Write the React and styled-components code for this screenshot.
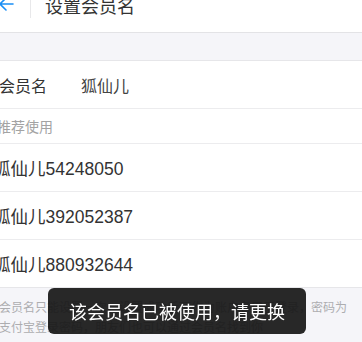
import React from "react";
import styled, {createGlobalStyle} from "styled-components";

const GlobalStyle = createGlobalStyle`
  html, body {
    margin: 0;
    padding: 0;
    overflow: hidden;
    background: #f5f5f9;
  }

  body {
    font-family: "Liberation Sans", "Noto Sans CJK SC", sans-serif;
  }
`;

const names = [
    "狐仙儿54248050",
    "狐仙儿392052387",
    "狐仙儿880932644"
];

const App = () => {
    return (
        <>
            <GlobalStyle/>
            <Page>
                <Header>
                    <Back>
                        <svg width="16" height="16" viewBox="0 0 16 16" fill="none">
                            <path d="M15 8H2M8 2L2 8l6 6" stroke="#1a8ef5" strokeWidth="1.6"
                                  strokeLinecap="round" strokeLinejoin="round"/>
                        </svg>
                    </Back>
                    <Divider/>
                    <Title>设置会员名</Title>
                </Header>
                <Section>
                    <FieldRow>
                        <Label>会员名</Label>
                        <Value>狐仙儿</Value>
                    </FieldRow>
                    <HintRow>推荐使用</HintRow>
                    {
                        names.map((item) => (
                            <NameRow key={item}>{item}</NameRow>
                        ))
                    }
                </Section>
                <Note>
                    会员名只能设置一次，设置成功后可作为账户名用于登录，密码为支付宝登录密码，朋友们也可以通过会员名找到你
                </Note>
            </Page>
            <Toast>该会员名已被使用，请更换</Toast>
        </>
    )
}

const Page = styled.div`
  margin-left: -16px;
  width: calc(100% + 16px);
  min-height: 342px;
  background: #f5f5f9;
`;

const Header = styled.div`
  display: flex;
  align-items: center;
  height: 54px;
  margin-top: -22px;
  padding-left: 14px;
  background: #fff;
  border-bottom: 1px solid #e3e3e6;
`;

const Back = styled.div`
  display: flex;
  align-items: center;
  width: 16px;
  height: 16px;
  margin-top: -2px;

  svg {
    display: block;
  }
`;

const Divider = styled.div`
  width: 1px;
  height: 26px;
  margin-left: 16px;
  background: #e8e8ea;
`;

const Title = styled.h1`
  margin: 0 0 0 14px;
  font-size: 18px;
  font-weight: normal;
  color: #333;
`;

const Section = styled.div`
  margin-top: 27px;
  background: #fff;
  border-top: 1px solid #e6e6e9;
  border-bottom: 1px solid #e6e6e9;
`;

const FieldRow = styled.div`
  display: flex;
  align-items: center;
  height: 47px;
  padding-left: 15px;
  border-bottom: 1px solid #ececee;
  font-size: 16px;
`;

const Label = styled.span`
  width: 82px;
  color: #333;
`;

const Value = styled.span`
  color: #444;
`;

const HintRow = styled.div`
  display: flex;
  align-items: center;
  height: 34px;
  padding-left: 13px;
  border-bottom: 1px solid #ececee;
  font-size: 14px;
  color: #a3a3a3;
`;

const NameRow = styled.div`
  display: flex;
  align-items: center;
  height: 47px;
  padding-left: 9px;
  font-size: 17.5px;
  color: #333;

  & + & {
    border-top: 1px solid #ececee;
  }
`;

const Note = styled.p`
  margin: 0;
  padding: 10px 10px 0 15px;
  font-size: 12px;
  line-height: 20px;
  color: #adadb0;
`;

const Toast = styled.div`
  position: fixed;
  left: 48px;
  top: 288px;
  display: flex;
  align-items: center;
  justify-content: center;
  width: 258px;
  height: 46px;
  border-radius: 6px;
  background: rgba(22, 22, 22, 0.92);
  color: #fff;
  font-size: 18px;
`;

export default App;
